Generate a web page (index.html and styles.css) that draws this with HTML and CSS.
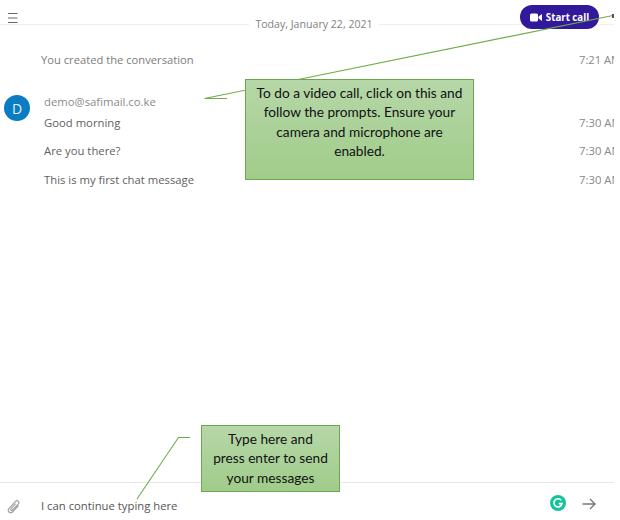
FILE: index.html
```html
<!DOCTYPE html>
<html lang="en">
<head>
<meta charset="utf-8">
<title>Conversation</title>
<link rel="stylesheet" href="styles.css">
</head>
<body>
<div class="app">
  <header class="top">
    <svg class="menu" width="12" height="12" viewBox="0 0 12 12"><path d="M1 1.500h9.500M1 6h9.500M1 10.500h9.500" stroke="#666" stroke-width="1.200" fill="none"/></svg>
    <div class="date-row">
      <span class="rule"></span>
      <span class="date">Today, January 22, 2021</span>
      <span class="rule"></span>
    </div>
    <button class="call">
      <svg width="12" height="9" viewBox="0 0 12 9"><rect x="0" y="0.5" width="8" height="8" rx="1.5" fill="#fff"/><path d="M8.5 3.5 12 1v7L8.5 5.5z" fill="#fff"/></svg>
      <span>Start call</span>
    </button>
  </header>

  <main class="thread">
    <div class="row system">
      <span class="text">You created the conversation</span>
      <span class="time">7:21 AM</span>
    </div>
    <div class="group">
      <div class="avatar">D</div>
      <div class="body">
        <div class="name">demo@safimail.co.ke</div>
        <div class="row"><span class="text">Good morning</span><span class="time">7:30 AM</span></div>
        <div class="row"><span class="text">Are you there?</span><span class="time">7:30 AM</span></div>
        <div class="row"><span class="text">This is my first chat message</span><span class="time">7:30 AM</span></div>
      </div>
    </div>
  </main>

  <footer class="composer">
    <svg class="clip" width="14" height="16" viewBox="0 0 14 16"><path d="M11.5 6.5 6 12.6c-1.2 1.3-3 1.4-4 .4s-.9-2.6.3-3.9l6-6.5c.9-1 2.2-1.1 3-.4s.7 2-.2 3L5.6 11c-.5.6-1.2.6-1.6.3s-.4-1 .1-1.6l4.6-5" fill="none" stroke="#a3a3a3" stroke-width="1.2"/></svg>
    <span class="draft">I can continue typing here</span>
    <span class="grammarly">
      <svg width="16" height="16" viewBox="0 0 16 16"><circle cx="8" cy="8" r="8" fill="#15c39a"/><path d="M11.3 5.4A4.1 4.1 0 1 0 12 8.6H8.8" fill="none" stroke="#fff" stroke-width="1.6"/></svg>
    </span>
    <svg class="send" width="14" height="12" viewBox="0 0 14 12"><path d="M0.5 6h12.5M8 1l5 5-5 5" fill="none" stroke="#777" stroke-width="1.4"/></svg>
  </footer>
</div>

<svg class="leaders" width="620" height="520" viewBox="0 0 620 520">
  <path d="M613 15.5 204.500 98.500H227" fill="none" stroke="#70ad47" stroke-width="1.100"/>
  <path d="M190 437.500H178.500L137 499" fill="none" stroke="#70ad47" stroke-width="1.100"/>
  <rect x="612" y="14" width="2" height="4" fill="#555"/>
</svg>
<div class="note note-call">To do a video call, click on this and follow the prompts. Ensure your camera and microphone are enabled.</div>
<div class="note note-type">Type here and press enter to send your messages</div>
</body>
</html>
```

FILE: styles.css
```css
* { box-sizing: border-box; }
html, body { margin: 0; height: 100%; background: #fff; }
body { position: relative; overflow: hidden; font-family: "Open Sans", "Liberation Sans", sans-serif; color: #616161; }

.app { width: 614px; height: 520px; overflow: hidden; display: flex; flex-direction: column; }

.top { height: 48px; flex: none; display: flex; align-items: flex-start; position: relative; }
.menu { position: absolute; left: 7px; top: 12px; }
.date-row { flex: 1; display: flex; align-items: center; height: 14px; margin-top: 17px; margin-right: -14px; gap: 6px; }
.rule { flex: 1; height: 1px; background: #efefef; }
.date { font-size: 10.6px; color: #7f7f7f; white-space: nowrap; }
.call { position: absolute; left: 520px; top: 5px; width: 79px; height: 24px; border: 0; border-radius: 12px; background: #32189a; color: #fff; display: flex; align-items: center; justify-content: center; gap: 4px; padding: 0; font-family: "Open Sans", sans-serif; font-weight: 700; font-size: 9.7px; }

.thread { flex: 1; min-height: 0; }
.row { display: flex; justify-content: space-between; height: 28.5px; align-items: center; font-size: 11.3px; }
.row .time { width: 35px; white-space: nowrap; color: #888; }
.system { padding-left: 41px; margin-top: -1px; height: 24px; font-size: 11.2px; color: #7c7c7c; }
.group { display: flex; margin-top: 23px; padding-left: 4px; }
.avatar { width: 26px; height: 26px; border-radius: 50%; background: #0a7cc4; color: #e4f1fa; font-size: 14px; display: flex; align-items: center; justify-content: center; margin-top: 1px; flex: none; }
.body { flex: 1; padding-left: 14px; }
.name { font-size: 11.3px; color: #8a8a8a; height: 14px; line-height: 16px; }

.composer { height: 38px; flex: none; border-top: 1px solid #e8e8e8; display: flex; align-items: center; position: relative; padding-top: 7px; }
.clip { position: absolute; left: 7px; top: 16px; }
.draft { margin-left: 41px; font-size: 11.3px; color: #555; }
.grammarly { position: absolute; left: 550px; top: 12px; display: flex; }
.send { position: absolute; left: 582px; top: 15px; }

.leaders { position: absolute; left: 0; top: 0; pointer-events: none; }
.note { position: absolute; background: linear-gradient(#b6d7a8, #a0cc8a); border: 1px solid #70a54f; color: #111; font-family: Lato, "Open Sans", sans-serif; font-size: 13.7px; line-height: 19.3px; text-align: center; }
.note-call { left: 245px; top: 79px; width: 229px; height: 101px; padding: 3px 8px; }
.note-type { left: 201px; top: 425px; width: 139px; height: 67px; padding: 3px 10px; }
```
